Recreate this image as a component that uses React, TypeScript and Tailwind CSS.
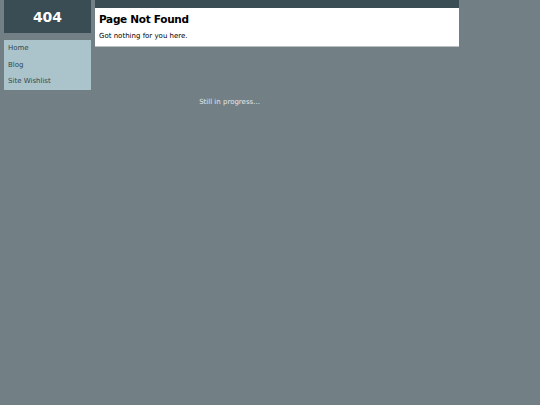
import React from "react";

export default function App() {
  return (
    <div className="min-h-[405px] w-full bg-[#727f85] text-[7px]" style={{ fontFamily: '"DejaVu Sans", Verdana, sans-serif' }}>
      <div className="w-[459px]">
        <div className="flex">
          <div className="ml-[4px] w-[87px] shrink-0">
            <div className="flex h-[33px] items-center justify-center bg-[#3a4c54] pt-[2px] text-[14px] font-bold text-white">404</div>
            <div className="mt-[7px] flex flex-col bg-[#abc4cb] px-[4px] text-[#2f4852]">
              <div className="h-[16.5px] leading-[16.5px]">Home</div>
              <div className="h-[16.5px] leading-[16.5px]">Blog</div>
              <div className="h-[16.5px] leading-[16.5px]">Site Wishlist</div>
            </div>
          </div>
          <div className="ml-[4px] flex-1">
            <div className="h-[8px] bg-[#3a4c54]" />
            <div className="h-[39px] border-b border-[#b9bfc1] bg-white px-[4px] text-black">
              <div className="pt-[4px] text-[10.5px] font-bold leading-[14px] tracking-[-0.3px]">Page Not Found</div>
              <div className="mt-[5px] leading-[10px]">Got nothing for you here.</div>
            </div>
          </div>
        </div>
        <div className="mt-[7px] text-center text-[#e3e8ea]">Still in progress...</div>
      </div>
    </div>
  );
}
